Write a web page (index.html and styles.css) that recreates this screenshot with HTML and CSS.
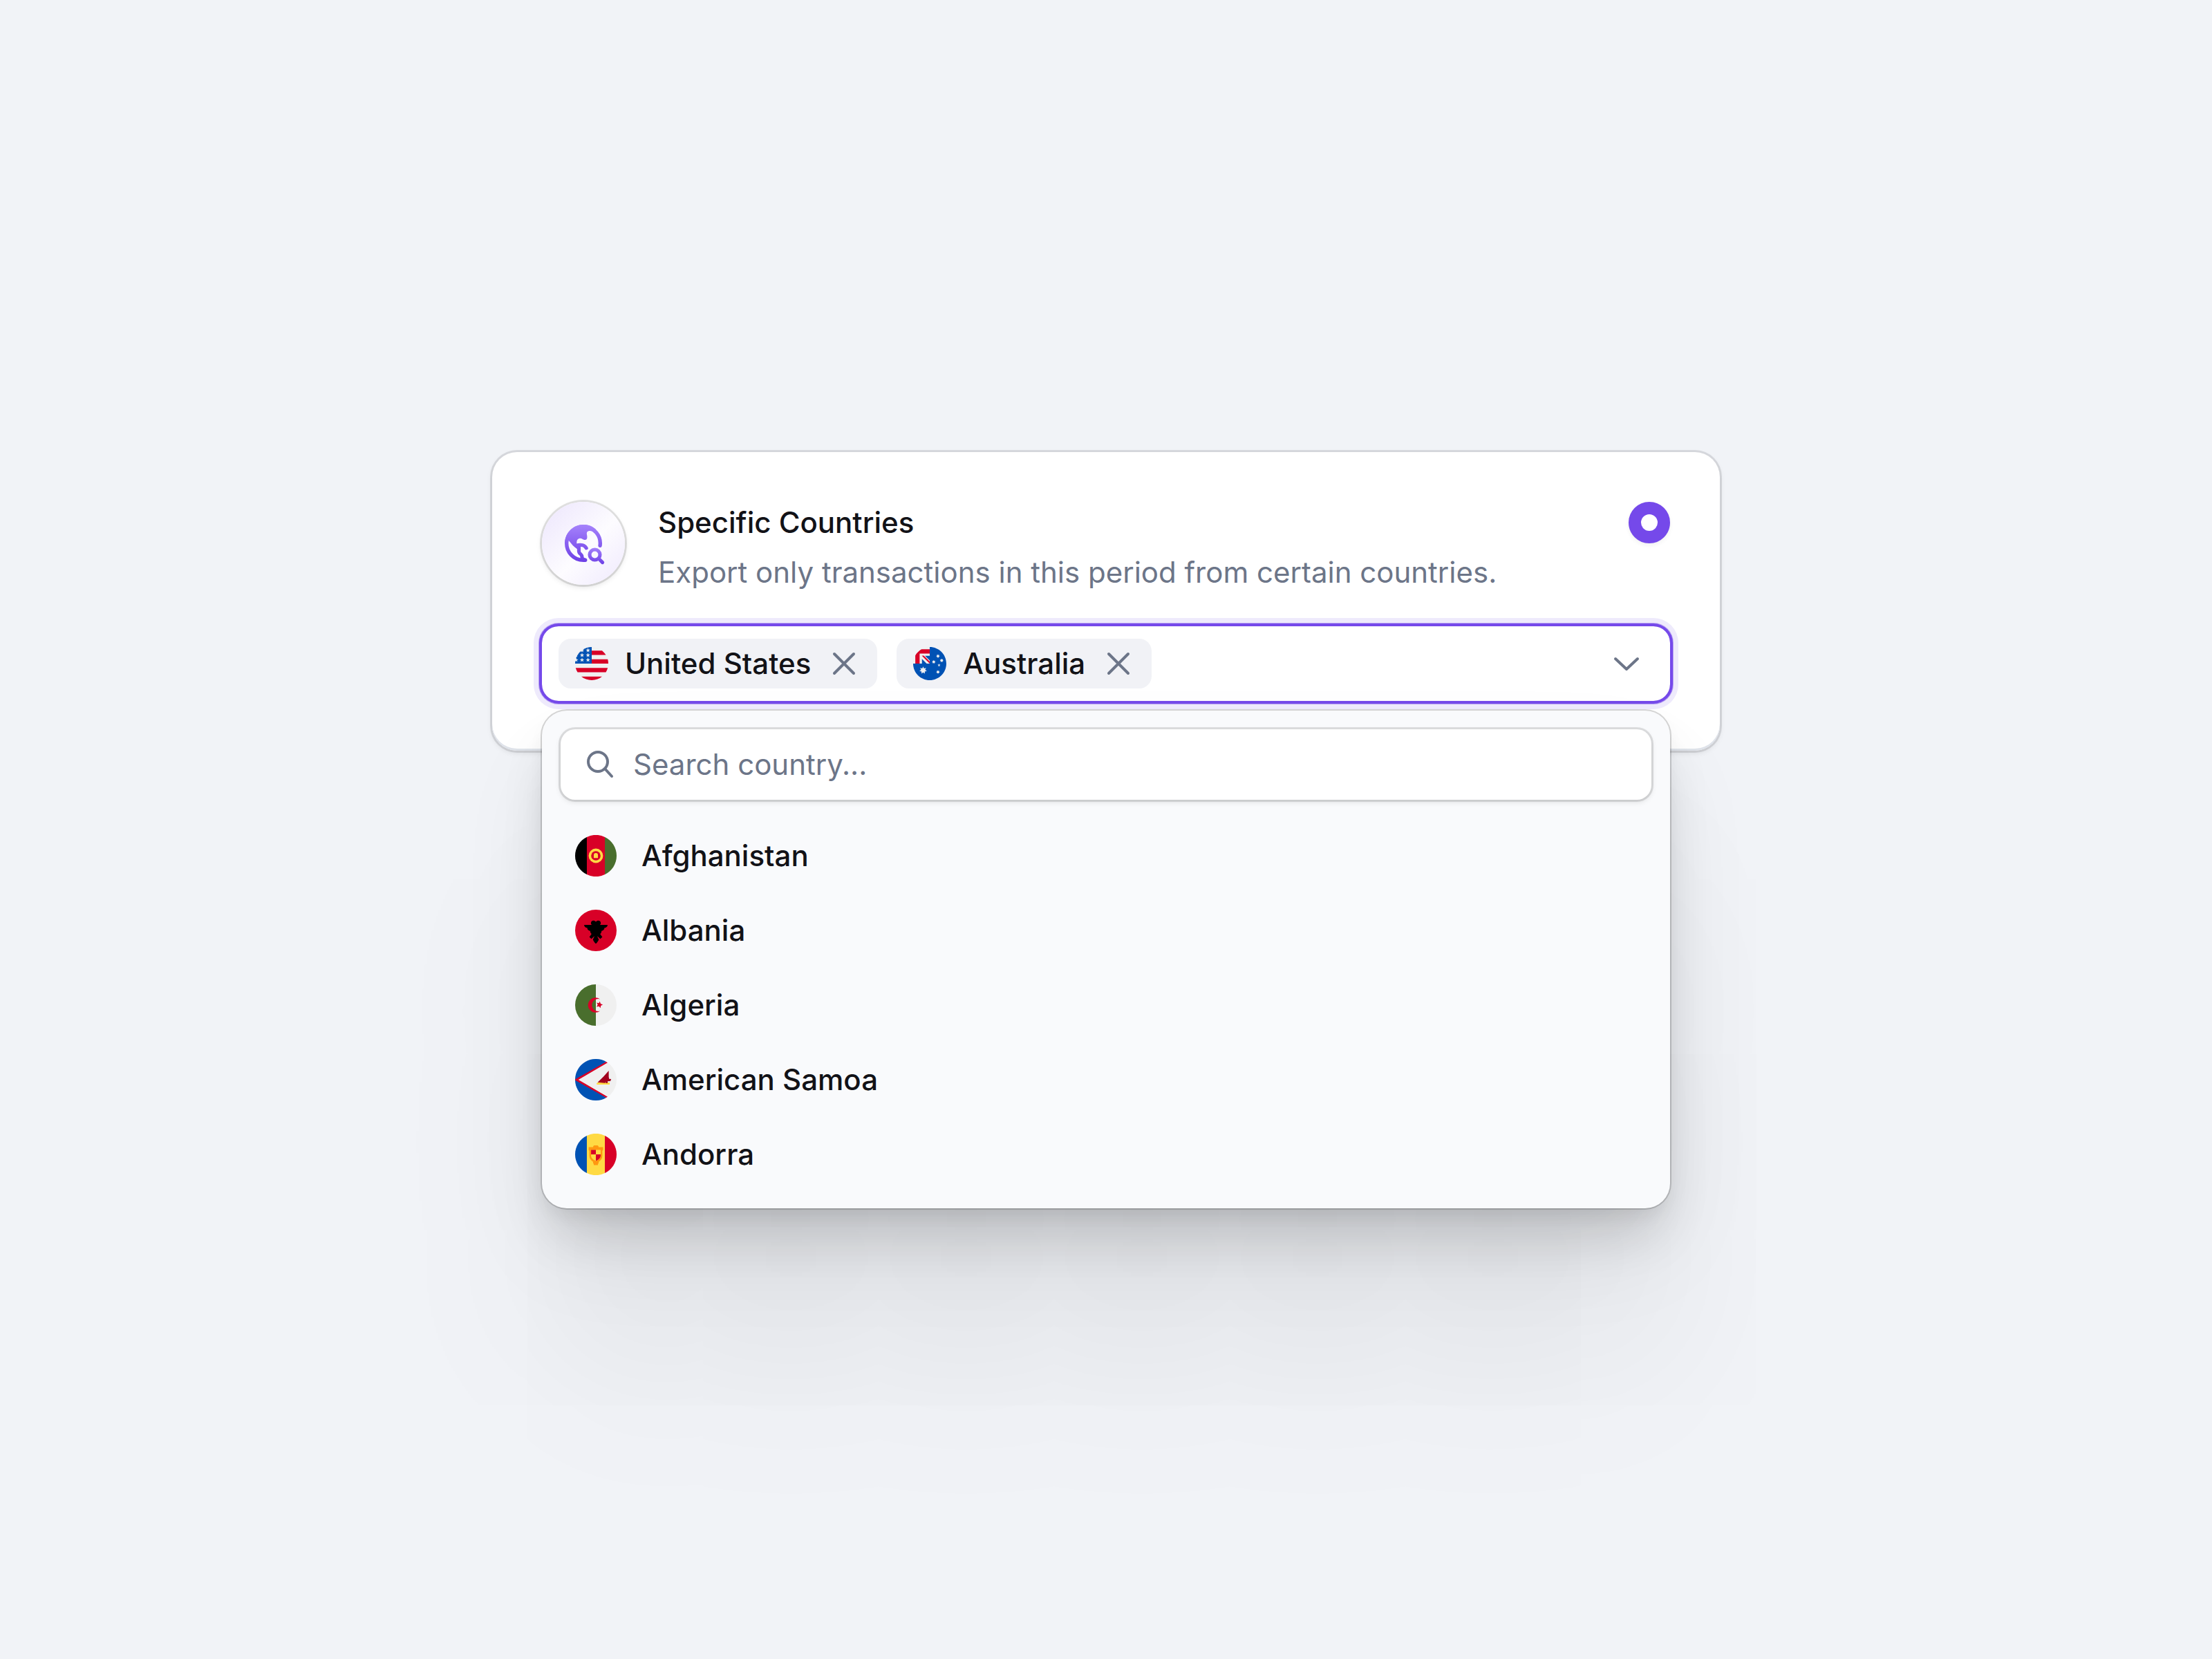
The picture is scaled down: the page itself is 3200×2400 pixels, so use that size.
FILE: index.html
```
<!DOCTYPE html>
<html lang="en">
<head>
    <meta charset="UTF-8">
    <meta name="viewport" content="width=device-width, initial-scale=1.0">
    <title>Export Transactions</title>
    <link rel="stylesheet" href="styles.css">
</head>
<body>

    <main class="picker">
        <section class="card">
            <!-- Option header -->
            <div class="card-header">
                <span class="card-icon">
                    <svg viewBox="0 0 24 24" fill="none" stroke-linecap="round" stroke-linejoin="round">
                        <defs>
                            <linearGradient id="globeFill" gradientUnits="userSpaceOnUse" x1="12" y1="3" x2="12" y2="21">
                                <stop offset="0" stop-color="#a582fb"/>
                                <stop offset="1" stop-color="#6d3fe6"/>
                            </linearGradient>
                            <linearGradient id="lensFill" gradientUnits="userSpaceOnUse" x1="12" y1="14" x2="12" y2="22">
                                <stop offset="0" stop-color="#a582fb"/>
                                <stop offset="1" stop-color="#6d3fe6"/>
                            </linearGradient>
                        </defs>
                        <path fill="url(#globeFill)" d="M3 12A9 9 0 0 1 18 5.3L17.3 7.1C16.5 6.1 15.5 5.9 14.5 6.1C13.6 6.3 13.5 7 13.7 8C14 9.5 13.7 10.5 12.5 10.3C11.6 10.2 11.2 9.4 10.2 9.6C9 9.8 8.6 10.8 8.8 12.2L9.4 15.2C8 13.8 7.4 13.6 6.8 12.9C6 11.9 5.6 11.3 4.7 10.4Z"/>
                        <path stroke="url(#globeFill)" stroke-width="1.8" d="M20.02 13.1A8.1 8.1 0 1 0 12 20.1H12.9"/>
                        <path stroke="url(#globeFill)" stroke-width="1.7" d="M8.8 13C10.8 12.4 12.6 12.9 13.4 14.3M9.7 13.4C10.2 14.6 9.3 15.9 10.2 16.8C11 17.5 11.4 17.7 11.3 18.6C11.3 19.4 11.9 19.8 12.6 20"/>
                        <g stroke="url(#lensFill)" stroke-width="1.7">
                            <circle cx="17.5" cy="17.5" r="2.5"/>
                            <path d="M19.5 19.5L21.2 21.2"/>
                        </g>
                    </svg>
                </span>
                <div class="card-text">
                    <label class="card-title" for="specificCountries">Specific Countries</label>
                    <p class="card-description">Export only transactions in this period from certain countries.</p>
                </div>
                <input type="radio" class="radio" id="specificCountries" name="scope" checked>
            </div>

            <!-- Selected countries -->
            <div class="select">
                <div class="chip">
                    <svg class="flag" viewBox="0 0 512 512">
                        <circle fill="#f0f0f0" cx="256" cy="256" r="256"/>
                        <g fill="#d80027">
                            <path d="M244.87,256H512c0-23.106-3.08-45.49-8.819-66.783H244.87V256z"/>
                            <path d="M244.87,122.435h229.556c-15.671-25.572-35.708-48.175-59.07-66.783H244.87V122.435z"/>
                            <path d="M256,512c60.249,0,115.626-20.824,159.356-55.652H96.644C140.374,491.176,195.751,512,256,512z"/>
                            <path d="M37.574,389.565h436.852c12.581-20.529,22.338-42.969,28.755-66.783H8.819C15.236,346.596,24.993,369.036,37.574,389.565z"/>
                        </g>
                        <path fill="#0052b4" d="M118.584,39.978h23.329l-21.7,15.765l8.289,25.509l-21.699-15.765L85.104,81.252l7.16-22.037C73.158,75.13,56.412,93.776,42.612,114.552h7.475l-13.813,10.035c-2.152,3.59-4.216,7.237-6.194,10.938l6.596,20.301l-12.306-8.941c-3.059,6.481-5.857,13.108-8.372,19.873l7.267,22.368h26.822l-21.7,15.765l8.289,25.509l-21.699-15.765l-12.998,9.444C0.678,234.537,0,245.189,0,256h256V0C205.428,0,158.285,14.67,118.584,39.978z M128.502,230.4l-21.699-15.765L85.104,230.4l8.289-25.509l-21.7-15.765h26.822l8.288-25.509l8.288,25.509h26.822l-21.7,15.765L128.502,230.4z M120.213,130.317l8.289,25.509l-21.699-15.765l-21.699,15.765l8.289-25.509l-21.7-15.765h26.822l8.288-25.509l8.288,25.509h26.822L120.213,130.317z M220.328,230.4l-21.699-15.765L176.93,230.4l8.289-25.509l-21.7-15.765h26.822l8.288-25.509l8.288,25.509h26.822l-21.7,15.765L220.328,230.4z M212.039,130.317l8.289,25.509l-21.699-15.765l-21.699,15.765l8.289-25.509l-21.7-15.765h26.822l8.288-25.509l8.288,25.509h26.822L212.039,130.317z M212.039,55.743l8.289,25.509l-21.699-15.765L176.93,81.252l8.289-25.509l-21.7-15.765h26.822l8.288-25.509l8.288,25.509h26.822L212.039,55.743z"/>
                    </svg>
                    <span>United States</span>
                    <button type="button" class="chip-remove" aria-label="Remove United States">
                        <svg viewBox="0 0 48 48"><path d="M10 10L38 38M38 10L10 38"/></svg>
                    </button>
                </div>
                <div class="chip">
                    <svg class="flag" viewBox="0 0 512 512">
                        <path fill="#0052b4" d="M512,256c0,141.384-114.616,256-256,256S0,397.384,0,256H256V0C397.384,0,512,114.615,512,256z"/>
                        <path fill="#0052b4" d="M133,133H256V256H133z"/>
                        <path fill="#f0f0f0" d="M256,133.566V0C114.592,0.024,0,114.629,0,256h133.565v-75.212L208.777,256H256v-47.222l-75.213-75.213H256z"/>
                        <g fill="#d80027">
                            <path d="M129.515,33.391C89.476,56.19,56.19,89.476,33.391,129.515V256h66.783V100.174H256V33.391H129.515z"/>
                            <path d="M256,224.519l-90.953-90.953h-31.481L256,256V224.519z"/>
                        </g>
                        <g fill="#f0f0f0">
                            <path d="M154.395,300.522l14.035,29.348l31.697-7.337l-14.2,29.27l25.495,20.183l-31.742,7.132l0.089,32.532l-25.374-20.358l-25.376,20.358l0.089-32.532l-31.74-7.132l25.496-20.182l-14.205-29.27l31.699,7.337L154.395,300.522z"/>
                            <path d="M383.284,356.174l7.018,14.674l15.849-3.668l-7.101,14.634l12.747,10.092l-15.871,3.565l0.045,16.266l-12.687-10.179l-12.688,10.179l0.045-16.266l-15.871-3.565l12.749-10.092l-7.104-14.634l15.85,3.668L383.284,356.174z"/>
                            <path d="M317.933,200.348l7.018,14.674l15.849-3.668l-7.101,14.634l12.747,10.092l-15.871,3.565l0.045,16.266l-12.687-10.179l-12.688,10.179l0.045-16.266l-15.871-3.565l12.749-10.092l-7.104-14.634l15.85,3.668L317.933,200.348z"/>
                            <path d="M383.284,111.304l7.018,14.674l15.849-3.668l-7.101,14.634l12.747,10.092l-15.871,3.565l0.045,16.266l-12.687-10.179l-12.688,10.179l0.045-16.266l-15.871-3.565l12.749-10.092l-7.104-14.634l15.85,3.668L383.284,111.304z"/>
                            <path d="M440.368,178.087l7.018,14.674l15.849-3.668l-7.101,14.634l12.747,10.092l-15.871,3.565l0.045,16.266l-12.687-10.179l-12.688,10.179l0.045-16.266l-15.871-3.565l12.749-10.092l-7.104-14.634l15.85,3.668L440.368,178.087z"/>
                            <path d="M399.55,256l5.525,17.006h17.881l-14.466,10.509l5.526,17.006l-14.466-10.511l-14.466,10.511l5.525-17.006l-14.465-10.509h17.88L399.55,256z"/>
                        </g>
                    </svg>
                    <span>Australia</span>
                    <button type="button" class="chip-remove" aria-label="Remove Australia">
                        <svg viewBox="0 0 48 48"><path d="M10 10L38 38M38 10L10 38"/></svg>
                    </button>
                </div>
                <button type="button" class="select-toggle" aria-label="Toggle country list">
                    <svg viewBox="0 0 60 60"><path d="M14 23L30 38L46 23"/></svg>
                </button>
            </div>
        </section>

        <!-- Country list -->
        <div class="dropdown">
            <label class="search">
                <svg viewBox="0 0 60 60"><circle cx="27" cy="26" r="14"/><path d="M37 36L47 47"/></svg>
                <input type="text" placeholder="Search country..." aria-label="Search country">
            </label>
            <ul class="countries">
                <li>
                    <button type="button" class="country">
                        <svg class="flag" viewBox="0 0 512 512">
                            <path d="M144.696,25.4C58.9,65.8,0,154,0,256s58.9,190.2,144.696,230.6L180,256z"/>
                            <path fill="#496e2d" d="M367.304,25.4C453.1,65.8,512,154,512,256s-58.9,190.2-144.696,230.6L330,256z"/>
                            <path fill="#d80027" d="M144.696,25.4a256,256,0,0,1,222.608,0V486.6a256,256,0,0,1-222.608,0z"/>
                            <circle fill="#ffda44" cx="256" cy="256" r="89"/>
                            <circle fill="#d80027" cx="256" cy="256" r="58"/>
                            <path fill="#ffda44" d="M230,283V248a26,26,0,0,1,52,0V283z"/>
                        </svg>
                        Afghanistan
                    </button>
                </li>
                <li>
                    <button type="button" class="country">
                        <svg class="flag" viewBox="0 0 512 512">
                            <circle fill="#d80027" cx="256" cy="256" r="256"/>
                            <path d="M400.696,187.882H305c7-5,12-13,12-22c0-17-13-31-30-31c-12,0-22,5-31,14c-9-9-19-14-31-14c-17,0-30,14-30,31c0,9,5,17,12,22H111.304c0,20.375,17.744,36.889,38.118,36.889c0,20.376,16,36.894,36.897,36.894c0,15,5,28,17,38L176,336l25,25l37-34c-3,13-10,26-18,42c8,20,20,36,36,51c16-15,28-31,36-51c-8-16-15-29-18-42l37,34l25-25l-27-36c12-10,17-23,17-38c20,0,36-16,36-37C382,225,400.696,208,400.696,187.882z"/>
                        </svg>
                        Albania
                    </button>
                </li>
                <li>
                    <button type="button" class="country">
                        <svg class="flag" viewBox="0 0 512 512">
                            <circle fill="#f0f0f0" cx="256" cy="256" r="256"/>
                            <path fill="#496e2d" d="M256,0a256,256,0,0,0,0,512z"/>
                            <path fill="#d80027" d="M308,184A92,92,0,1,0,308,328A76,76,0,1,1,308,184z"/>
                            <path fill="#d80027" d="M304,211L316,240L342,250L317,264L313,293L294,271L265,278L279,252L266,226L293,233z"/>
                        </svg>
                        Algeria
                    </button>
                </li>
                <li>
                    <button type="button" class="country">
                        <svg class="flag" viewBox="0 0 512 512">
                            <circle fill="#f0f0f0" cx="256" cy="256" r="256"/>
                            <path fill="#0052b4" d="M384,34.2A256,256,0,0,0,0,256A256,256,0,0,0,384,477.8L60,256z"/>
                            <path fill="#d80027" d="M384,34.2L2,249V263L384,477.8L401,466L46,256L401,46z"/>
                            <path fill="#f0f0f0" d="M401,46L40,256L401,466z"/>
                            <path fill="#ffda44" d="M263,304L278,290H426V316H270z"/>
                            <path fill="#a2001d" d="M278,288L350,217L415,145V224L421,240L415,246L445,248L436,272L402,275L400,298H380V282L370,296z"/>
                        </svg>
                        American Samoa
                    </button>
                </li>
                <li>
                    <button type="button" class="country">
                        <svg class="flag" viewBox="0 0 512 512">
                            <path fill="#0052b4" d="M144.696,25.4C58.9,65.8,0,154,0,256s58.9,190.2,144.696,230.6L180,256z"/>
                            <path fill="#d80027" d="M367.304,25.4C453.1,65.8,512,154,512,256s-58.9,190.2-144.696,230.6L330,256z"/>
                            <path fill="#ffda44" d="M144.696,25.4a256,256,0,0,1,222.608,0V486.6a256,256,0,0,1-222.608,0z"/>
                            <path fill="#ff9811" d="M223,155L234,145H278L289,155V167H345V202L336,212V270C336,306,318,330,290,347V369H282V389H230V369H222V347C194,330,176,306,176,270V212L167,202V167H223z"/>
                            <path fill="#ffda44" d="M197,200H315V270C315,300,290,322,256,334C222,322,197,300,197,270z"/>
                            <path fill="#d80027" d="M197,200H256V257H197zM256,257H315V270C315,300,290,322,256,334z"/>
                        </svg>
                        Andorra
                    </button>
                </li>
            </ul>
        </div>
    </main>

</body>
</html>
```
FILE: styles.css
```
* {
    box-sizing: border-box;
}

body {
    font-family: Inter, "Liberation Sans", sans-serif;
    font-size: 42px;
    line-height: 60px;
    margin: 0;
    min-height: 100vh;
    display: flex;
    align-items: center;
    justify-content: center;
    padding: 50px 48px 48px;
    background-color: #f1f3f7;
    color: #121217;
}

button, input {
    font: inherit;
    color: inherit;
    margin: 0;
    padding: 0;
    border: none;
    background: none;
}

button {
    cursor: pointer;
}

.picker {
    width: 100%;
    max-width: 1776px;
}

.card {
    padding: 72px;
    border-radius: 36px;
    background-color: white;
    box-shadow: 0 0 0 3px rgba(18, 18, 23, 0.11), 0 3px 9px rgba(18, 18, 23, 0.1), inset 0 -3px 0 #dfe3ea;
}

.card-header {
    display: flex;
    align-items: flex-start;
    gap: 48px;
    margin-bottom: 48px;
}

.card-icon {
    flex: none;
    display: grid;
    place-items: center;
    width: 120px;
    height: 120px;
    border-radius: 50%;
    background: linear-gradient(135deg, #efe9fd 10%, #fdfcff 55%, #efe9fd 100%);
    box-shadow: 0 0 0 3px rgba(0, 0, 0, 0.11), 0 3px 9px rgba(0, 0, 0, 0.12);
}

.card-icon svg {
    width: 72px;
    height: 72px;
}

.card-text {
    flex: 1;
    display: grid;
    gap: 12px;
}

.card-title {
    font-weight: 500;
}

.card-description {
    margin: 0;
    color: #6c7588;
}

.radio {
    appearance: none;
    flex: none;
    width: 60px;
    height: 60px;
    border: 18px solid #7549ea;
    border-radius: 50%;
    background-color: white;
    box-shadow: 0 3px 6px rgba(18, 18, 23, 0.06);
}

.select {
    display: flex;
    align-items: center;
    gap: 28px;
    padding: 18px 33px 18px 24px;
    border-radius: 24px;
    box-shadow: 0 0 0 4px #7549ea, 0 0 0 5px #b6a0f0, 0 0 0 12px #eeeafc;
}

.chip {
    display: flex;
    align-items: center;
    gap: 24px;
    height: 72px;
    padding: 0 24px;
    border-radius: 18px;
    background-color: #f1f2f6;
    font-weight: 500;
}

.flag {
    flex: none;
    width: 60px;
    height: 60px;
}

.chip .flag, .chip-remove, .chip-remove svg {
    display: block;
    width: 48px;
    height: 48px;
}

.chip-remove, .select-toggle, .search svg {
    fill: none;
    stroke: #6c7588;
    stroke-width: 4;
    stroke-linecap: round;
    stroke-linejoin: round;
}

.select-toggle, .select-toggle svg {
    display: block;
    width: 60px;
    height: 60px;
}

.select-toggle {
    margin-left: auto;
}

/* Opens over the lower edge of the card */
.dropdown {
    position: relative;
    margin: -58px 72px 0;
    padding: 27px 27px 24px;
    border-radius: 36px;
    background-color: #f9fafc;
    box-shadow:
        0 0 0 2px rgba(0, 0, 0, 0.16),
        0 12px 24px -3px rgba(0, 0, 0, 0.06),
        0 48px 72px -12px rgba(0, 0, 0, 0.12),
        0 72px 144px -24px rgba(0, 0, 0, 0.1),
        0 240px 300px rgba(0, 0, 0, 0.06);
}

.search {
    display: flex;
    align-items: center;
    gap: 18px;
    height: 102px;
    padding: 0 27px;
    margin-bottom: 27px;
    border-radius: 21px;
    background-color: white;
    box-shadow: 0 0 0 3px rgba(0, 0, 0, 0.11), 0 3px 9px rgba(0, 0, 0, 0.12);
}

.search svg {
    flex: none;
    width: 60px;
    height: 60px;
}

.search input {
    flex: 1;
    min-width: 0;
    height: 60px;
    outline: none;
}

.search input::placeholder {
    color: #6c7588;
    opacity: 1;
}

.countries {
    list-style: none;
    margin: 0;
    padding: 0;
}

.country {
    display: flex;
    align-items: center;
    gap: 36px;
    width: 100%;
    height: 108px;
    padding: 0 21px;
    border-radius: 18px;
    font-weight: 500;
    text-align: left;
}

.country:hover {
    background-color: #f1f2f6;
}
```
